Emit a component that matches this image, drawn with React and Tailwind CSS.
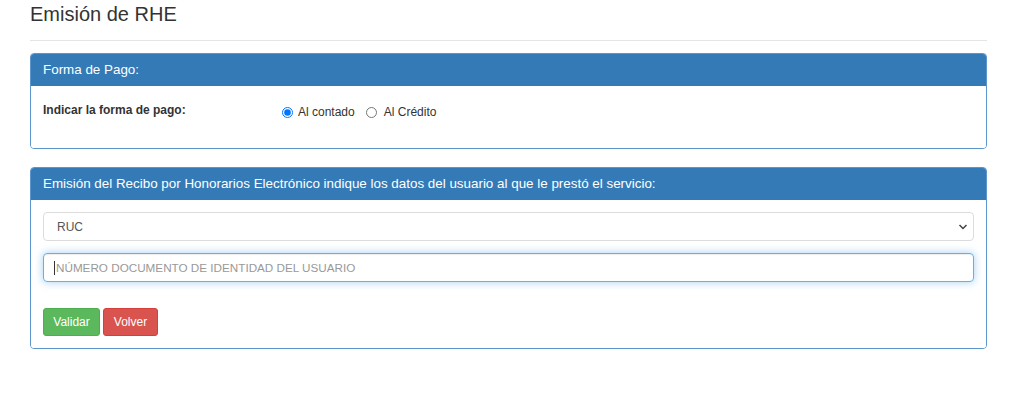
import React from "react";

export default function App() {
  return (
    <div className="w-[1024px] h-[409px] bg-white text-[#333] font-['Liberation_Sans',Arial,sans-serif]">
      <div className="ml-[30px] w-[957px] pt-[3px]">
        <h3 className="text-[20px] leading-[22px] font-normal text-[#333]">Emisión de RHE</h3>
        <div className="mt-[15px] h-px bg-[#e5e5e5]" />

        {/* Panel 1 */}
        <div className="mt-[12px] border border-[#5b95cc] rounded-[4px] overflow-hidden">
          <div className="h-[32px] bg-[#337ab7] text-white text-[13.4px] flex items-center px-[12px]">
            Forma de Pago:
          </div>
          <div className="h-[62px] bg-white pt-[16px] px-[12px] text-[12px] leading-[16px] flex">
            <div className="w-[239px] font-bold">Indicar la forma de pago:</div>
            <div className="flex items-center mt-[2px] h-[16px]">
              <input type="radio" name="pago" defaultChecked className="w-[11px] h-[11px] m-0 accent-[#0075ff]" />
              <span className="ml-[5px]">Al contado</span>
              <input type="radio" name="pago" className="w-[11px] h-[11px] m-0 ml-[11px]" />
              <span className="ml-[7px]">Al Crédito</span>
            </div>
          </div>
        </div>

        {/* Panel 2 */}
        <div className="mt-[18px] border border-[#5b95cc] rounded-[4px] overflow-hidden">
          <div className="h-[32px] bg-[#337ab7] text-white text-[13.4px] flex items-center px-[12px]">
            Emisión del Recibo por Honorarios Electrónico indique los datos del usuario al que le prestó el servicio:
          </div>
          <div className="bg-white px-[12px] pt-[12px] pb-[12px]">
            <div className="relative h-[29px] w-[931px] border border-[#dcdcdc] rounded-[4px] flex items-center pl-[13px] text-[12px] text-[#555]">
              RUC
              <svg className="absolute right-[5px] top-[10px]" width="10" height="8" viewBox="0 0 10 8">
                <path d="M1.5 2 L5 5.5 L8.5 2" fill="none" stroke="#444" strokeWidth="1.5" />
              </svg>
            </div>
            <div className="relative mt-[12px] h-[29px] w-[931px] border border-[#66afe9] rounded-[4px] shadow-[inset_0_1px_1px_rgba(0,0,0,0.075),0_0_8px_rgba(102,175,233,0.6)] flex items-center pl-[10px] text-[11.7px] text-[#999]">
              <span className="w-px h-[14px] bg-[#333] mr-[1px]" />
              NÚMERO DOCUMENTO DE IDENTIDAD DEL USUARIO
            </div>
            <div className="mt-[26px] flex gap-[3px]">
              <button className="h-[28px] w-[57px] rounded-[3px] bg-[#5cb85c] border border-[#4cae4c] text-white text-[12px]">
                Validar
              </button>
              <button className="h-[28px] w-[55px] rounded-[3px] bg-[#d9534f] border border-[#d43f3a] text-white text-[12px]">
                Volver
              </button>
            </div>
          </div>
        </div>
      </div>
    </div>
  );
}
